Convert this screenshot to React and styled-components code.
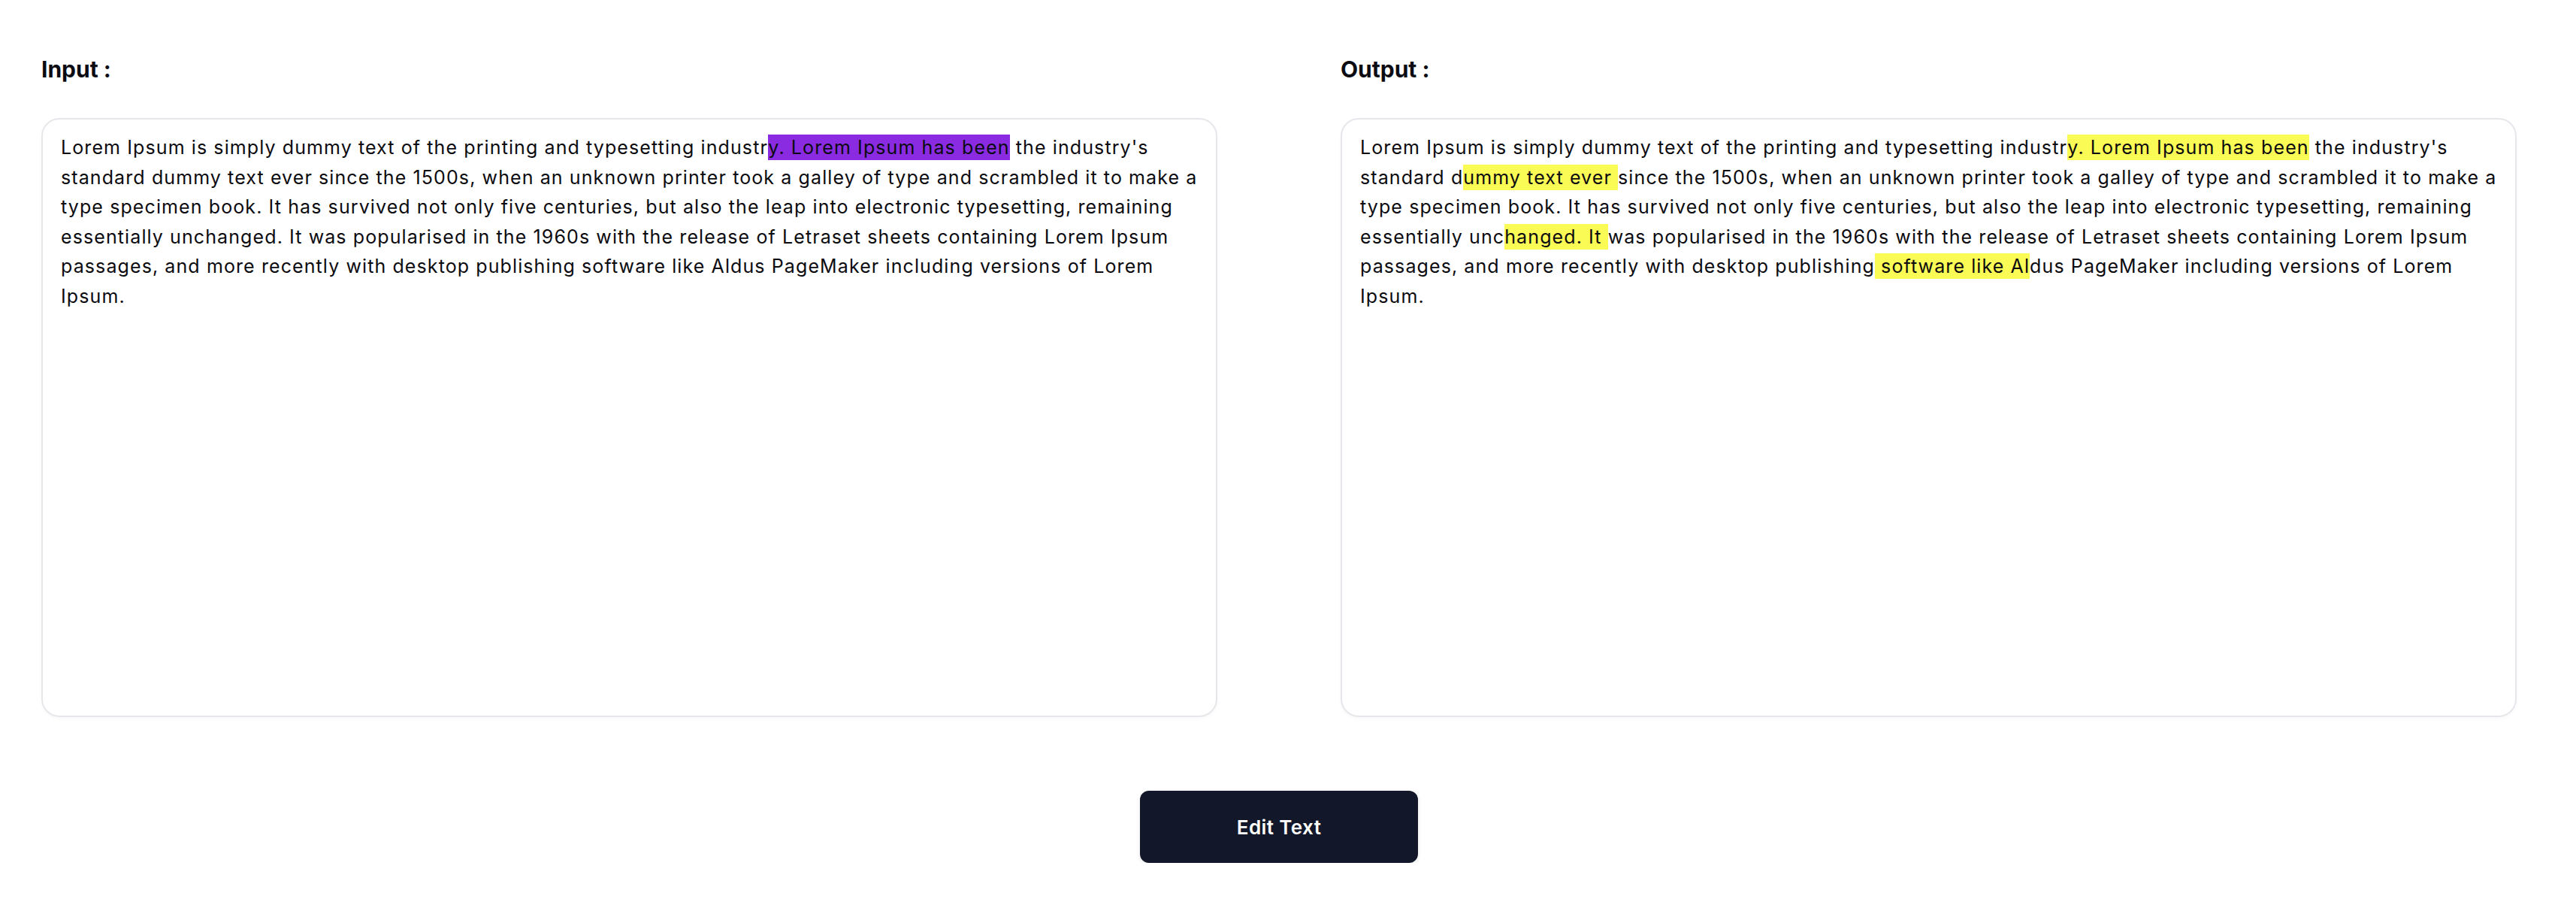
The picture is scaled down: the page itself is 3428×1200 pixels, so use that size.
import styled, { createGlobalStyle } from 'styled-components'

const GlobalStyle = createGlobalStyle`
	body {
		margin: 0;
		background: #ffffff;
		font-family: Inter, 'Noto Sans', sans-serif;
		color: #0b0b0f;
	}
`

const highlight = {
	purple: '#8a2be2',
	yellow: '#fbfb55',
}

const App = () => {
	return (
		<Page>
			<GlobalStyle />
			<Columns>
				<Column>
					<Heading>Input :</Heading>
					<TextCard>
						Lorem Ipsum is simply dummy text of the printing and typesetting
						industr<Mark $tone='purple'>y. Lorem Ipsum has been</Mark> the
						industry's standard dummy text ever since the 1500s, when an unknown
						printer took a galley of type and scrambled it to make a type
						specimen book. It has survived not only five centuries, but also the
						leap into electronic typesetting, remaining essentially unchanged. It
						was popularised in the 1960s with the release of Letraset sheets
						containing Lorem Ipsum passages, and more recently with desktop
						publishing software like Aldus PageMaker including versions of Lorem
						Ipsum.
					</TextCard>
				</Column>
				<Column>
					<Heading>Output :</Heading>
					<TextCard>
						Lorem Ipsum is simply dummy text of the printing and typesetting
						industr<Mark $tone='yellow'>y. Lorem Ipsum has been</Mark> the
						industry's standard d<Mark $tone='yellow'>ummy text ever </Mark>since
						the 1500s, when an unknown printer took a galley of type and
						scrambled it to make a type specimen book. It has survived not only
						five centuries, but also the leap into electronic typesetting,
						remaining essentially unc<Mark $tone='yellow'>hanged. It </Mark>was
						popularised in the 1960s with the release of Letraset sheets
						containing Lorem Ipsum passages, and more recently with desktop
						publishing<Mark $tone='yellow'> software like Al</Mark>dus PageMaker
						including versions of Lorem Ipsum.
					</TextCard>
				</Column>
			</Columns>
			<ButtonRow>
				<EditButton type='button'>Edit Text</EditButton>
			</ButtonRow>
		</Page>
	)
}

const Page = styled.main`
	padding: 71px 79px 0 55px;
`

const Columns = styled.div`
	display: grid;
	grid-template-columns: 1fr 1fr;
	gap: 164px;
`

const Column = styled.section`
	display: flex;
	flex-direction: column;
	gap: 44px;
`

const Heading = styled.h2`
	margin: 0;
	font-size: 30px;
	line-height: 42px;
	font-weight: 700;
	color: #0b0b12;
`

const TextCard = styled.div`
	box-sizing: border-box;
	height: 797px;
	padding: 18px 24px 14px;
	border: 2px solid #e6e7eb;
	border-radius: 24px;
	box-shadow: 0 2px 4px rgba(17, 24, 39, 0.03);
	font-size: 25px;
	line-height: 39.5px;
	letter-spacing: 1.1px;
	color: #0b0b0f;
`

const Mark = styled.span`
	padding: 2px 0;
	background: ${(p) => highlight[p.$tone]};
`

const ButtonRow = styled.div`
	display: flex;
	justify-content: center;
	margin-top: 98px;
`

const EditButton = styled.button`
	width: 370px;
	height: 96px;
	border: none;
	border-radius: 12px;
	background: #121829;
	color: #ffffff;
	font-family: Inter, 'Noto Sans', sans-serif;
	font-size: 26px;
	font-weight: 600;
	letter-spacing: 0.4px;
	box-shadow: 0 2px 6px rgba(17, 24, 39, 0.08);
	cursor: pointer;
`

export default App
